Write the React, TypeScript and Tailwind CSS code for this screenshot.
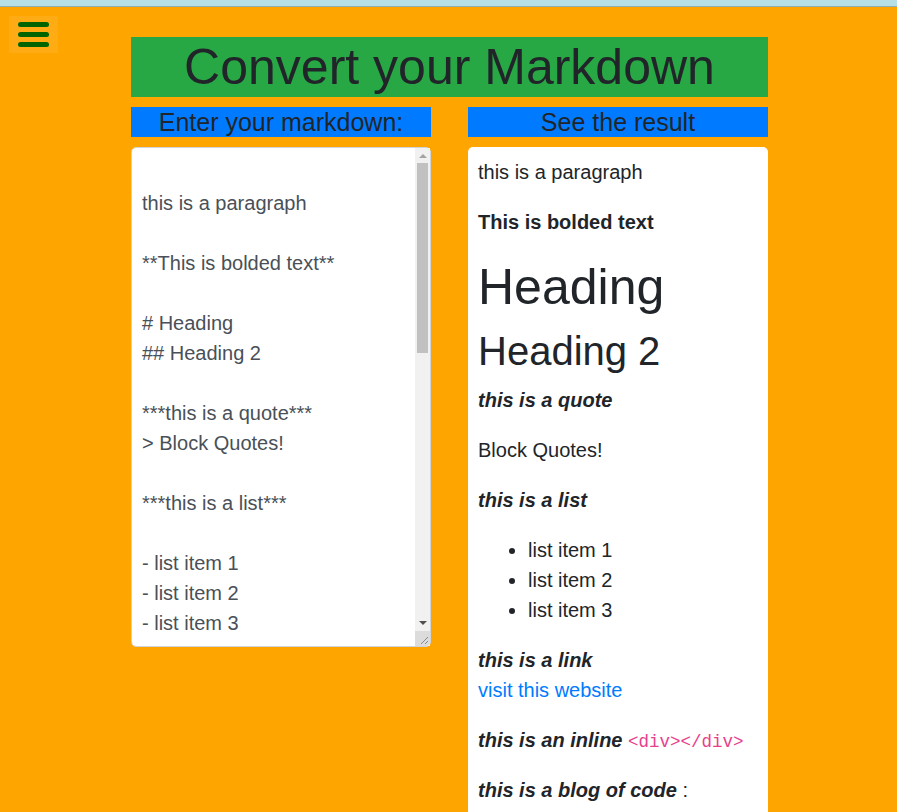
import { useState } from 'react'

const SOURCE = `
this is a paragraph

**This is bolded text**

# Heading
## Heading 2

***this is a quote***
> Block Quotes!

***this is a list***

- list item 1
- list item 2
- list item 3

***this is a link***
[visit this website](https://www.freecodecamp.org)

***this is an inline*** \`<div></div>\`

***this is a blog of code*** :

\`\`\`
let x = 1;
let y = 2;
let z = x + y;
\`\`\`

![React Logo w/ Text](https://image.ibb.co/exZRn9/React_Logo_w_text.png)`

function MenuButton() {
  return (
    <button className="absolute left-[9px] top-[16px] flex h-[37px] w-[49px] flex-col items-center justify-center gap-[5.5px] bg-[#ffac14]">
      <span className="block h-[4.5px] w-[31px] rounded-full bg-[#006400]" />
      <span className="block h-[4.5px] w-[31px] rounded-full bg-[#006400]" />
      <span className="block h-[4.5px] w-[31px] rounded-full bg-[#006400]" />
    </button>
  )
}

// the browser hides native scrollbars here, so draw the textarea's one
function FakeScrollbar() {
  return (
    <div className="pointer-events-none absolute bottom-[1px] right-[1px] top-[1px] flex w-[15px] flex-col bg-[#f1f1f1]">
      <div className="flex h-[15px] items-center justify-center">
        <svg width="8" height="5" viewBox="0 0 8 5">
          <path d="M0 5 L4 1 L8 5 Z" fill="#a3a3a3" />
        </svg>
      </div>
      <div className="flex-1 px-[2px]">
        <div className="h-[190px] bg-[#c1c1c1]" />
      </div>
      <div className="flex h-[15px] items-center justify-center">
        <svg width="8" height="5" viewBox="0 0 8 5">
          <path d="M0 0 L8 0 L4 4 Z" fill="#505050" />
        </svg>
      </div>
      <div className="flex h-[15px] items-end justify-end bg-[#dcdcdc] rounded-br-[4px]">
        <svg width="15" height="15" viewBox="0 0 15 15">
          <path d="M13 6 L6 13 M13 10 L10 13" stroke="#8a8a8a" strokeWidth="1" />
        </svg>
      </div>
    </div>
  )
}

function Preview() {
  return (
    <div className="h-[700px] rounded-[5px] bg-white p-[10px] text-[20px] leading-[30px] text-[#212529]">
      <p className="mb-[20px]">this is a paragraph</p>
      <p className="mb-[20px] font-bold">This is bolded text</p>
      <h1 className="mb-[10px] text-[50px] leading-[60px]">Heading</h1>
      <h2 className="mb-[10px] text-[40px] leading-[48px]">Heading 2</h2>
      <p className="mb-[20px] font-bold italic">this is a quote</p>
      <blockquote className="mb-[20px]">
        <p>Block Quotes!</p>
      </blockquote>
      <p className="mb-[20px] font-bold italic">this is a list</p>
      <ul className="mb-[20px] list-disc pl-[50px]">
        <li>list item 1</li>
        <li>list item 2</li>
        <li>list item 3</li>
      </ul>
      <p className="mb-[20px]">
        <em className="font-bold">this is a link</em>
        <br />
        <a href="#" className="text-[#007bff]">
          visit this website
        </a>
      </p>
      <p className="mb-[20px]">
        <em className="font-bold">this is an inline</em>{' '}
        <code className="font-['Liberation_Mono',monospace] text-[17.5px] leading-[20px] text-[#e83e8c]">
          {'<div></div>'}
        </code>
      </p>
      <p className="mb-[20px]">
        <em className="font-bold">this is a blog of code</em> :
      </p>
    </div>
  )
}

export default function App() {
  const [markdown, setMarkdown] = useState(SOURCE)

  return (
    <div className="relative h-[812px] overflow-hidden bg-[#ffa500] font-['Liberation_Sans',Arial,sans-serif] text-[#212529]">
      <div className="h-[7px] border-b border-[#93acae] bg-[#b7e0e6]" />
      <MenuButton />
      <div className="ml-[131px] mt-[30px] grid w-[637px] grid-cols-[300px_300px] gap-x-[37px]">
        <h1 className="col-span-2 mb-[10px] h-[60px] bg-[#28a745] text-center text-[50px] leading-[60px]">
          Convert your Markdown
        </h1>
        <div>
          <h4 className="mb-[10px] h-[30px] bg-[#007bff] text-center text-[25px] leading-[30px]">
            Enter your markdown:
          </h4>
          <div className="relative">
            <textarea
              value={markdown}
              onChange={(e) => setMarkdown(e.target.value)}
              className="block h-[500px] w-full resize-none overflow-y-scroll rounded-[5px] border border-[#ced4da] bg-white py-[10px] pl-[10px] pr-[25px] text-[20px] leading-[30px] text-[#495057] outline-none"
            />
            <FakeScrollbar />
          </div>
        </div>
        <div>
          <h4 className="mb-[10px] h-[30px] bg-[#007bff] text-center text-[25px] leading-[30px]">
            See the result
          </h4>
          <Preview />
        </div>
      </div>
    </div>
  )
}
